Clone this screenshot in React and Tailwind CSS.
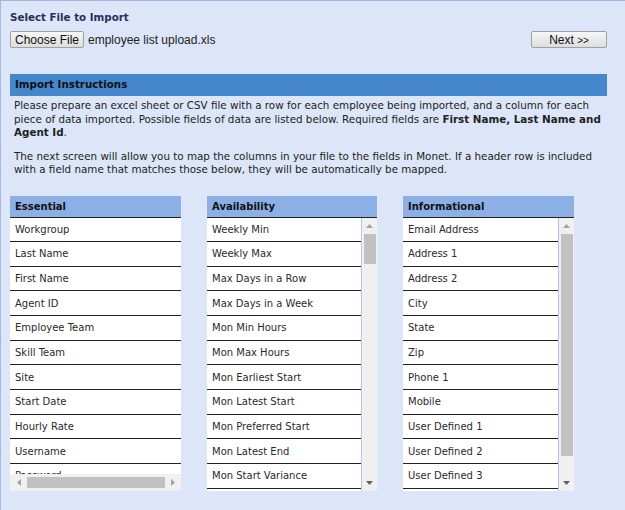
import React from 'react';

const essential = ['Workgroup', 'Last Name', 'First Name', 'Agent ID', 'Employee Team', 'Skill Team', 'Site', 'Start Date', 'Hourly Rate', 'Username', 'Password'];
const availability = ['Weekly Min', 'Weekly Max', 'Max Days in a Row', 'Max Days in a Week', 'Mon Min Hours', 'Mon Max Hours', 'Mon Earliest Start', 'Mon Latest Start', 'Mon Preferred Start', 'Mon Latest End', 'Mon Start Variance'];
const informational = ['Email Address', 'Address 1', 'Address 2', 'City', 'State', 'Zip', 'Phone 1', 'Mobile', 'User Defined 1', 'User Defined 2', 'User Defined 3'];

const Rows = ({ items }) => (
    <div className="flex-1 overflow-hidden bg-white">
        {items.map(item => (
            <div key={item} className="h-[24.67px] border-b border-[#222] flex items-center pl-[5px] whitespace-nowrap text-[#2a2a2a]">
                {item}
            </div>
        ))}
    </div>
);

const VScroll = ({ thumb }) => (
    <div className="w-[16px] bg-[#f0f0f0] border-l border-[#b3c7ec] flex flex-col items-center">
        <div className="h-[16px] flex items-center justify-center">
            <svg width="7" height="4" viewBox="0 0 7 4"><path d="M0 4 L3.5 0 L7 4 Z" fill="#a3a3a3" /></svg>
        </div>
        <div className={`w-[12px] bg-[#c1c1c1] ${thumb}`} />
        <div className="flex-1" />
        <div className="h-[16px] flex items-center justify-center">
            <svg width="7" height="4" viewBox="0 0 7 4"><path d="M0 0 L7 0 L3.5 4 Z" fill="#606060" /></svg>
        </div>
    </div>
);

const Header = ({ title }) => (
    <div className="h-[22px] bg-[#8cafe6] border-b border-[#222] font-bold pl-[5px] flex items-center text-[#111]">
        {title}
    </div>
);

const App = () => {
    return (
        <div className="h-[510px] bg-[#dce6f8] border-l border-t border-[#a3b9e3] pl-[9px] pt-[9px] font-['DejaVu_Sans',sans-serif] text-[10px]">
            <div className="w-[597px]">
                <div className="font-bold text-[#2d2d5a] h-[14px] leading-[14px] text-[10.3px]">Select File to Import</div>

                <div className="mt-[7px] h-[17px] flex items-center justify-between font-['Liberation_Sans',sans-serif]">
                    <div className="flex items-center">
                        <button className="h-[17px] w-[74px] border border-[#a0a0a0] rounded-[2px] bg-gradient-to-b from-[#f7f7f7] to-[#dddddd] text-[12px] text-[#111] leading-none">
                            Choose File
                        </button>
                        <span className="ml-[4px] text-[12px] text-[#222]">employee list upload.xls</span>
                    </div>
                    <button className="h-[17px] w-[76px] border border-[#a0a0a0] rounded-[2px] bg-gradient-to-b from-[#f7f7f7] to-[#dddddd] text-[12px] text-[#111] leading-none">
                        Next <span className="text-[10px]">&gt;&gt;</span>
                    </button>
                </div>

                <div className="mt-[26px] h-[22px] bg-[#4587cd] font-bold pl-[5px] flex items-center text-[#111] text-[10.3px]">Import Instructions</div>

                <div className="pl-[4px] pt-[3px] leading-[13.5px] text-[#222] whitespace-nowrap text-[10.35px]">
                    <p>
                        Please prepare an excel sheet or CSV file with a row for each employee being imported, and a column for each<br />
                        piece of data imported. Possible fields of data are listed below. Required fields are <b>First Name, Last Name and</b><br />
                        <b>Agent Id</b>.
                    </p>
                    <p className="mt-[10px]">
                        The next screen will allow you to map the columns in your file to the fields in Monet. If a header row is included<br />
                        with a field name that matches those below, they will be automatically be mapped.
                    </p>
                </div>

                <div className="mt-[19px] flex">
                    {/* Essential */}
                    <div className="w-[171px]">
                        <Header title="Essential" />
                        <div className="h-[273px] flex flex-col">
                            <Rows items={essential} />
                            <div className="h-[17px] bg-[#f0f0f0] flex items-center">
                                <div className="w-[17px] flex items-center justify-center">
                                    <svg width="4" height="7" viewBox="0 0 4 7"><path d="M4 0 L0 3.5 L4 7 Z" fill="#a3a3a3" /></svg>
                                </div>
                                <div className="w-[138px] h-[11px] bg-[#c1c1c1]" />
                                <div className="flex-1 flex items-center justify-center">
                                    <svg width="4" height="7" viewBox="0 0 4 7"><path d="M0 0 L4 3.5 L0 7 Z" fill="#a3a3a3" /></svg>
                                </div>
                            </div>
                        </div>
                    </div>

                    {/* Availability */}
                    <div className="w-[170px] ml-[26px]">
                        <Header title="Availability" />
                        <div className="h-[273px] flex">
                            <Rows items={availability} />
                            <VScroll thumb="h-[30px]" />
                        </div>
                    </div>

                    {/* Informational */}
                    <div className="w-[171px] ml-[26px]">
                        <Header title="Informational" />
                        <div className="h-[273px] flex">
                            <Rows items={informational} />
                            <VScroll thumb="h-[222px]" />
                        </div>
                    </div>
                </div>
            </div>
        </div>
    );
};

export default App;
